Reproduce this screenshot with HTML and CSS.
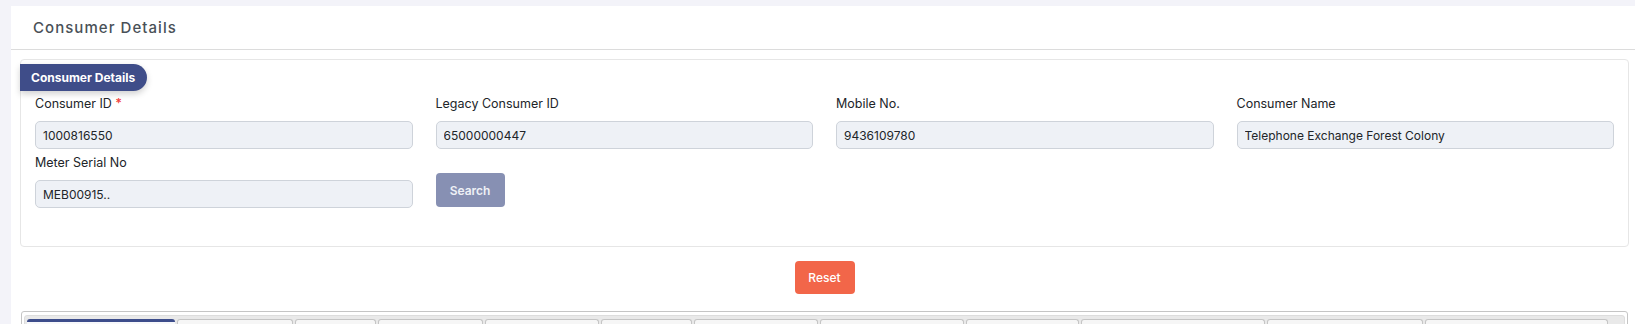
FILE: index.html
```html
<!DOCTYPE html>
<html lang="en">
<head>
<meta charset="utf-8">
<title>Consumer Details</title>
<link rel="stylesheet" href="styles.css">
</head>
<body>
<div class="page">
  <div class="card">
    <div class="card-header">
      <h4 class="card-title">Consumer Details</h4>
    </div>
    <div class="card-body">
      <div class="fieldset">
        <div class="legend">Consumer Details</div>
        <div class="form-grid">
          <div class="field">
            <label class="field-label">Consumer ID <span class="req">*</span></label>
            <input class="field-input" type="text" value="1000816550" readonly>
          </div>
          <div class="field">
            <label class="field-label">Legacy Consumer ID</label>
            <input class="field-input" type="text" value="65000000447" readonly>
          </div>
          <div class="field">
            <label class="field-label">Mobile No.</label>
            <input class="field-input" type="text" value="9436109780" readonly>
          </div>
          <div class="field">
            <label class="field-label">Consumer Name</label>
            <input class="field-input" type="text" value="Telephone Exchange Forest Colony" readonly>
          </div>
          <div class="field">
            <label class="field-label">Meter Serial No</label>
            <input class="field-input" type="text" value="MEB00915.." readonly>
          </div>
          <div class="field field-action">
            <button class="btn btn-search" type="button">Search</button>
          </div>
        </div>
      </div>
      <div class="actions">
        <button class="btn btn-reset" type="button">Reset</button>
      </div>
      <div class="tabs">
        <ul class="tabs-nav">
          <li class="tab tab-active"></li>
          <li class="tab"></li>
          <li class="tab"></li>
          <li class="tab"></li>
          <li class="tab"></li>
          <li class="tab"></li>
          <li class="tab"></li>
          <li class="tab"></li>
          <li class="tab"></li>
          <li class="tab"></li>
          <li class="tab"></li>
          <li class="tab"></li>
        </ul>
      </div>
    </div>
  </div>
</div>
</body>
</html>
```

FILE: styles.css
```css
* { box-sizing: border-box; }

html, body {
  margin: 0;
  padding: 0;
}

body {
  background: #f3f3f9;
  font-family: Inter, "Noto Sans", Arial, sans-serif;
  color: #212529;
  overflow: hidden;
}

.page {
  padding: 6px 0 0 11px;
}

.card {
  background: #ffffff;
  min-height: 400px;
}

.card-header {
  height: 44px;
  border-bottom: 1px solid #dcdcdc;
  display: flex;
  align-items: center;
  padding-left: 22px;
}

.card-title {
  margin: 0;
  font-size: 15px;
  font-weight: 500;
  letter-spacing: 1.05px;
  color: #495057;
}

.card-body {
  padding: 9px 6px 0 9px;
}

.fieldset {
  border: 1px solid #e6e6e6;
  border-radius: 4px;
  padding: 4px 14px 38px 14px;
}

.legend {
  display: inline-flex;
  align-items: center;
  height: 27px;
  margin-left: -15px;
  padding: 0 12px 0 11px;
  background: #3f4d89;
  color: #ffffff;
  font-size: 12px;
  font-weight: 700;
  border-radius: 0 14px 14px 0;
  box-shadow: 0 3px 6px rgba(0, 0, 0, 0.18);
}

.form-grid {
  margin-top: 4px;
  display: grid;
  grid-template-columns: repeat(4, 1fr);
  column-gap: 23px;
  row-gap: 5px;
}

.field {
  display: flex;
  flex-direction: column;
}

.field-label {
  height: 18px;
  line-height: 18px;
  font-size: 12.5px;
  font-weight: 400;
  color: #212529;
  margin-bottom: 8px;
}

.req {
  color: #f1403c;
  font-weight: 600;
}

.field-input {
  height: 28px;
  border: 1px solid #ced3da;
  border-radius: 5px;
  background: #eef1f6;
  padding: 0 7px;
  font-family: Inter, "Noto Sans", Arial, sans-serif;
  font-size: 12px;
  color: #212529;
  outline: none;
}

.field-action {
  padding-top: 19px;
}

.btn {
  border: none;
  border-radius: 4px;
  color: #ffffff;
  font-family: Inter, "Noto Sans", Arial, sans-serif;
  font-size: 12px;
  cursor: pointer;
}

.btn-search {
  width: 69px;
  height: 34px;
  background: #8790b3;
  font-weight: 600;
  color: #eef0f6;
}

.actions {
  display: flex;
  justify-content: center;
  padding-top: 14px;
}

.btn-reset {
  width: 60px;
  height: 33px;
  background: #f26649;
  font-weight: 500;
}

.tabs {
  margin: 17px 1px 0 1px;
  border: 1px solid #c5c5c5;
  border-radius: 3px;
  padding: 3px 2px;
  background: #ffffff;
}

.tabs-nav {
  list-style: none;
  margin: 0;
  padding: 3px 2px 0 2px;
  background: #e9e9e9;
  border: 1px solid #dddddd;
  border-radius: 3px;
  display: flex;
  height: 40px;
}

.tab {
  height: 32px;
  margin-right: 2px;
  border: 1px solid #c5c5c5;
  border-bottom: none;
  border-radius: 3px 3px 0 0;
  background: #f6f6f6;
  flex: none;
}

.tab-active {
  border: none;
  border-top: 3px solid #3d4d8b;
  background: #f7f8fb;
}

.tab:nth-child(1) { width: 148px; }
.tab:nth-child(2) { width: 116px; }
.tab:nth-child(3) { width: 81px; }
.tab:nth-child(4) { width: 105px; }
.tab:nth-child(5) { width: 114px; }
.tab:nth-child(6) { width: 91px; }
.tab:nth-child(7) { width: 124px; }
.tab:nth-child(8) { width: 144px; }
.tab:nth-child(9) { width: 113px; }
.tab:nth-child(10) { width: 184px; }
.tab:nth-child(11) { width: 156px; }
.tab:nth-child(12) { width: 183px; }
```
